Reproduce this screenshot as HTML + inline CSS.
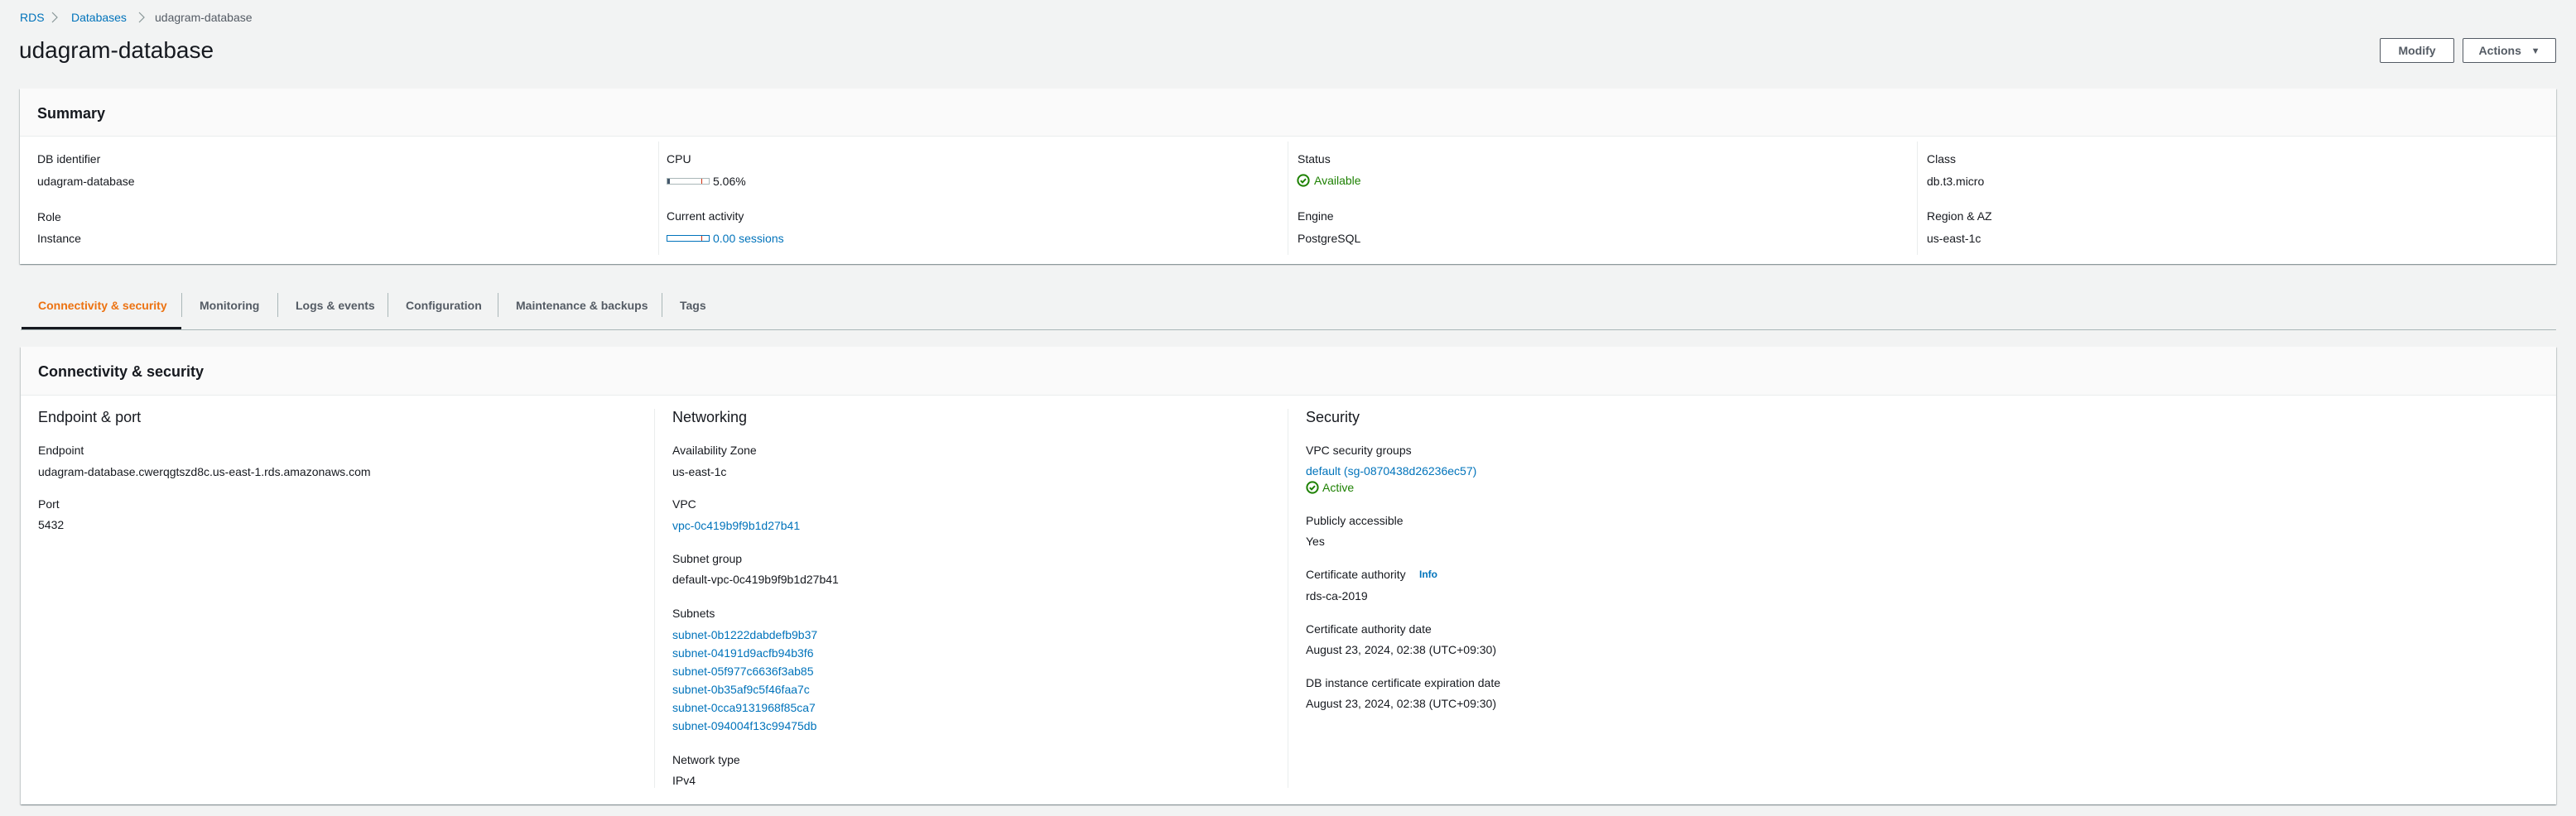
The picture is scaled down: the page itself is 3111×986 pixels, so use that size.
<!DOCTYPE html>
<html><head><meta charset="utf-8"><style>
*{margin:0;padding:0;box-sizing:border-box}
body{width:3111px;height:986px;background:#f2f3f3;font-family:"Liberation Sans",sans-serif;font-size:14px;color:#16191f;position:relative;overflow:hidden}
.t{position:absolute;line-height:20px;white-space:nowrap}
.a{color:#0073bb}
.g{color:#1d8102}
.card{position:absolute;background:#fff;box-shadow:0 1px 1px 0 rgba(0,28,36,.3),1px 1px 1px 0 rgba(0,28,36,.15),-1px 1px 1px 0 rgba(0,28,36,.15)}
.hd{position:absolute;left:0;right:0;top:0;background:#fafafa;border-bottom:1px solid #eaeded}
.vl{position:absolute;width:1px;background:#eaeded}
.btn{position:absolute;border:1px solid #545b64;border-radius:2px;background:#fff;color:#545b64;font-weight:bold;font-size:14px;line-height:28px;text-align:center}
.tab{position:absolute;top:359px;line-height:20px;font-weight:bold;color:#545b64}
.sep{position:absolute;top:354px;height:29px;width:1px;background:#aab7b8}
.h3{font-size:18px;line-height:24px}
</style></head><body>
<div class="t a" style="left:24px;top:11px">RDS</div>
<svg style="position:absolute;left:62px;top:14px" width="8" height="14"><path d="M1 1l6 6-6 6" fill="none" stroke="#879596" stroke-width="1.2"/></svg>
<div class="t a" style="left:86px;top:11px">Databases</div>
<svg style="position:absolute;left:167px;top:14px" width="8" height="14"><path d="M1 1l6 6-6 6" fill="none" stroke="#879596" stroke-width="1.2"/></svg>
<div class="t" style="left:187px;top:11px;color:#545b64">udagram-database</div>
<div class="t" style="left:23px;top:44px;font-size:28px;line-height:34px">udagram-database</div>
<div class="btn" style="left:2874px;top:46px;width:90px;height:30px">Modify</div>
<div class="btn" style="left:2974px;top:46px;width:113px;height:30px">Actions&nbsp;&nbsp;&nbsp;<span style="font-size:11px;position:relative;top:-1px">▼</span></div>

<div class="card" style="left:24px;top:107px;width:3063px;height:212px">
 <div class="hd" style="height:58px"></div>
 <div class="t" style="left:21px;top:18px;font-size:18px;line-height:24px;font-weight:bold">Summary</div>
 <div class="vl" style="left:771px;top:64px;height:137px"></div>
 <div class="vl" style="left:1531px;top:64px;height:137px"></div>
 <div class="vl" style="left:2291px;top:64px;height:137px"></div>
</div>
<div class="t" style="left:45px;top:182px">DB identifier</div>
<div class="t" style="left:45px;top:209px">udagram-database</div>
<div class="t" style="left:45px;top:252px">Role</div>
<div class="t" style="left:45px;top:278px">Instance</div>
<div class="t" style="left:805px;top:182px">CPU</div>
<div style="position:absolute;left:805px;top:215px;width:52px;height:8px;border:1px solid #aab7b8;background:#fff"><div style="position:absolute;left:0;top:0;width:3px;height:6px;background:#44576b"></div><div style="position:absolute;left:41px;top:0;width:1px;height:6px;background:#d13212"></div></div>
<div class="t" style="left:861px;top:209px">5.06%</div>
<div class="t" style="left:805px;top:251px">Current activity</div>
<div style="position:absolute;left:805px;top:284px;width:52px;height:8px;border:1px solid #0073bb;background:#fff"><div style="position:absolute;left:41px;top:0;width:1px;height:6px;background:#d13212"></div></div>
<div class="t a" style="left:861px;top:278px">0.00 sessions</div>
<div class="t" style="left:1567px;top:182px">Status</div>
<svg style="position:absolute;left:1566px;top:210px" width="16" height="16"><circle cx="8" cy="8" r="6.6" fill="none" stroke="#1d8102" stroke-width="2"/><path d="M4.8 8.2l2.2 2.2 4-4.2" fill="none" stroke="#1d8102" stroke-width="2"/></svg>
<div class="t g" style="left:1587px;top:208px">Available</div>
<div class="t" style="left:1567px;top:251px">Engine</div>
<div class="t" style="left:1567px;top:278px">PostgreSQL</div>
<div class="t" style="left:2327px;top:182px">Class</div>
<div class="t" style="left:2327px;top:209px">db.t3.micro</div>
<div class="t" style="left:2327px;top:251px">Region &amp; AZ</div>
<div class="t" style="left:2327px;top:278px">us-east-1c</div>

<div style="position:absolute;left:25px;top:398px;width:3062px;height:1px;background:#aab7b8"></div>
<div style="position:absolute;left:26px;top:395px;width:193px;height:3px;background:#16191f"></div>
<div class="tab" style="left:46px;color:#ec7211">Connectivity &amp; security</div>
<div class="sep" style="left:219px"></div>
<div class="tab" style="left:241px">Monitoring</div>
<div class="sep" style="left:335px"></div>
<div class="tab" style="left:357px">Logs &amp; events</div>
<div class="sep" style="left:468px"></div>
<div class="tab" style="left:490px">Configuration</div>
<div class="sep" style="left:601px"></div>
<div class="tab" style="left:623px">Maintenance &amp; backups</div>
<div class="sep" style="left:799px"></div>
<div class="tab" style="left:821px">Tags</div>

<div class="card" style="left:25px;top:419px;width:3062px;height:553px">
 <div class="hd" style="height:59px"></div>
 <div class="t" style="left:21px;top:18px;font-size:18px;line-height:24px;font-weight:bold">Connectivity &amp; security</div>
 <div class="vl" style="left:765px;top:75px;height:458px"></div>
 <div class="vl" style="left:1530px;top:75px;height:458px"></div>
</div>
<div class="t h3" style="left:46px;top:492px">Endpoint &amp; port</div>
<div class="t" style="left:46px;top:534px">Endpoint</div>
<div class="t" style="left:46px;top:560px">udagram-database.cwerqgtszd8c.us-east-1.rds.amazonaws.com</div>
<div class="t" style="left:46px;top:599px">Port</div>
<div class="t" style="left:46px;top:624px">5432</div>

<div class="t h3" style="left:812px;top:492px">Networking</div>
<div class="t" style="left:812px;top:534px">Availability Zone</div>
<div class="t" style="left:812px;top:560px">us-east-1c</div>
<div class="t" style="left:812px;top:599px">VPC</div>
<div class="t a" style="left:812px;top:625px">vpc-0c419b9f9b1d27b41</div>
<div class="t" style="left:812px;top:665px">Subnet group</div>
<div class="t" style="left:812px;top:690px">default-vpc-0c419b9f9b1d27b41</div>
<div class="t" style="left:812px;top:731px">Subnets</div>
<div class="t a" style="left:812px;top:757px">subnet-0b1222dabdefb9b37</div>
<div class="t a" style="left:812px;top:779px">subnet-04191d9acfb94b3f6</div>
<div class="t a" style="left:812px;top:801px">subnet-05f977c6636f3ab85</div>
<div class="t a" style="left:812px;top:823px">subnet-0b35af9c5f46faa7c</div>
<div class="t a" style="left:812px;top:845px">subnet-0cca9131968f85ca7</div>
<div class="t a" style="left:812px;top:867px">subnet-094004f13c99475db</div>
<div class="t" style="left:812px;top:908px">Network type</div>
<div class="t" style="left:812px;top:933px">IPv4</div>

<div class="t h3" style="left:1577px;top:492px">Security</div>
<div class="t" style="left:1577px;top:534px">VPC security groups</div>
<div class="t a" style="left:1577px;top:559px">default (sg-0870438d26236ec57)</div>
<svg style="position:absolute;left:1577px;top:581px" width="16" height="16"><circle cx="8" cy="8" r="6.6" fill="none" stroke="#1d8102" stroke-width="2"/><path d="M4.8 8.2l2.2 2.2 4-4.2" fill="none" stroke="#1d8102" stroke-width="2"/></svg>
<div class="t g" style="left:1597px;top:579px">Active</div>
<div class="t" style="left:1577px;top:619px">Publicly accessible</div>
<div class="t" style="left:1577px;top:644px">Yes</div>
<div class="t" style="left:1577px;top:684px">Certificate authority</div>
<div class="t a" style="left:1714px;top:684px;font-size:12px;font-weight:bold">Info</div>
<div class="t" style="left:1577px;top:710px">rds-ca-2019</div>
<div class="t" style="left:1577px;top:750px">Certificate authority date</div>
<div class="t" style="left:1577px;top:775px">August 23, 2024, 02:38 (UTC+09:30)</div>
<div class="t" style="left:1577px;top:815px">DB instance certificate expiration date</div>
<div class="t" style="left:1577px;top:840px">August 23, 2024, 02:38 (UTC+09:30)</div>
</body></html>
